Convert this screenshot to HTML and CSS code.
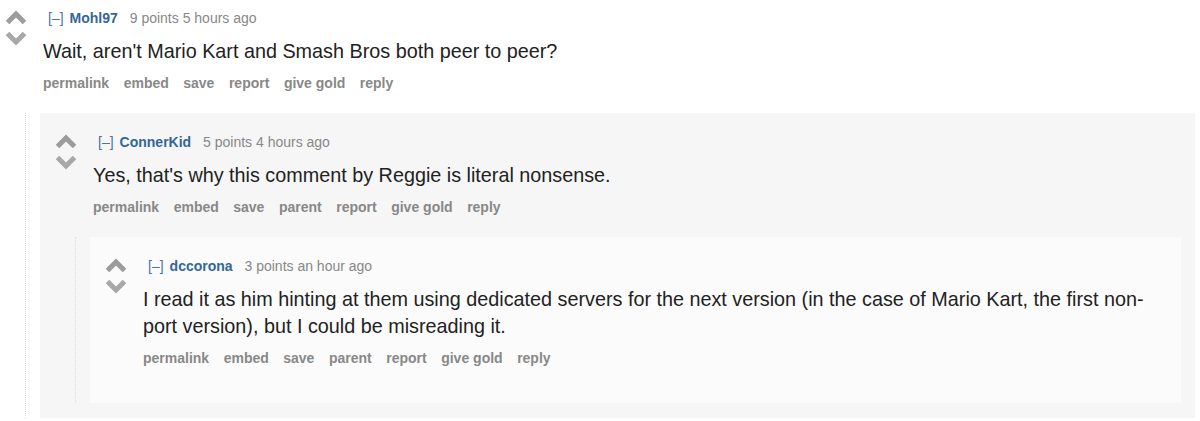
FILE: index.html
```html
<!DOCTYPE html>
<html>
<head>
<meta charset="utf-8">
<link rel="stylesheet" href="styles.css">
</head>
<body>
<div class="thread">
  <div class="comment top">
    <div class="row">
      <div class="midcol">
        <svg class="arrow up" viewBox="0 0 22 14" width="22" height="14"><polyline points="2.5,12.5 11,4 19.5,12.5"/></svg>
        <svg class="arrow down" viewBox="0 0 22 14" width="22" height="14"><polyline points="2.5,1.5 11,10 19.5,1.5"/></svg>
      </div>
      <div class="entry">
        <p class="tagline"><span class="expand">[–]</span><span class="author">Mohl97</span> <span class="score">9 points 5 hours ago</span></p>
        <div class="md"><p>Wait, aren't Mario Kart and Smash Bros both peer to peer?</p></div>
        <ul class="buttons"><li>permalink</li><li>embed</li><li>save</li><li>report</li><li>give gold</li><li>reply</li></ul>
      </div>
    </div>
    <div class="child">
      <div class="comment level2">
        <div class="row">
          <div class="midcol">
            <svg class="arrow up" viewBox="0 0 22 14" width="22" height="14"><polyline points="2.5,12.5 11,4 19.5,12.5"/></svg>
            <svg class="arrow down" viewBox="0 0 22 14" width="22" height="14"><polyline points="2.5,1.5 11,10 19.5,1.5"/></svg>
          </div>
          <div class="entry">
            <p class="tagline"><span class="expand">[–]</span><span class="author">ConnerKid</span> <span class="score">5 points 4 hours ago</span></p>
            <div class="md"><p>Yes, that's why this comment by Reggie is literal nonsense.</p></div>
            <ul class="buttons"><li>permalink</li><li>embed</li><li>save</li><li>parent</li><li>report</li><li>give gold</li><li>reply</li></ul>
          </div>
        </div>
        <div class="child">
          <div class="comment level3">
            <div class="row">
              <div class="midcol">
                <svg class="arrow up" viewBox="0 0 22 14" width="22" height="14"><polyline points="2.5,12.5 11,4 19.5,12.5"/></svg>
                <svg class="arrow down" viewBox="0 0 22 14" width="22" height="14"><polyline points="2.5,1.5 11,10 19.5,1.5"/></svg>
              </div>
              <div class="entry">
                <p class="tagline"><span class="expand">[–]</span><span class="author">dccorona</span> <span class="score">3 points an hour ago</span></p>
                <div class="md"><p>I read it as him hinting at them using dedicated servers for the next version (in the case of Mario Kart, the first non-port version), but I could be misreading it.</p></div>
                <ul class="buttons"><li>permalink</li><li>embed</li><li>save</li><li>parent</li><li>report</li><li>give gold</li><li>reply</li></ul>
              </div>
            </div>
          </div>
        </div>
      </div>
    </div>
  </div>
</div>
</body>
</html>
```

FILE: styles.css
```css
html, body {
  margin: 0;
  padding: 0;
  background: #ffffff;
  overflow: hidden;
}

body {
  font-family: "Liberation Sans", Arial, sans-serif;
  color: #222222;
}

.thread {
  margin: -11px 0 0 -10px;
}

.comment {
  padding: 19px 14px 14px 0;
}

.comment.top {
  padding-right: 5px;
}

.comment.level2 {
  background: #f6f6f6;
  padding-bottom: 15px;
}

.comment.level3 {
  background: #fbfbfb;
  padding-bottom: 15px;
}

.row {
  display: flex;
  align-items: flex-start;
}

.midcol {
  flex: 0 0 22px;
  width: 22px;
  margin: 2px 16px 0 15px;
  display: flex;
  flex-direction: column;
  gap: 8px;
}

.arrow {
  display: block;
}

.arrow polyline {
  fill: none;
  stroke-width: 5;
  stroke-linecap: butt;
  stroke-linejoin: miter;
}

.arrow.up polyline {
  stroke: #9c9c9c;
}

.arrow.down polyline {
  stroke: #a8a8a8;
}

.entry {
  flex: 1 1 auto;
  min-width: 0;
  padding-bottom: 20px;
}

.tagline {
  margin: 0;
  padding-left: 5px;
  font-size: 14px;
  line-height: 20px;
  color: #888888;
}

.expand {
  color: #4a74a0;
  margin-right: 6px;
}

.author {
  color: #336699;
  font-weight: bold;
  margin-right: 8px;
}

.score {
  color: #888888;
}

.md {
  margin-top: 10px;
  font-size: 19.8px;
  line-height: 27px;
  color: #222222;
}

.md p {
  margin: 0;
}

.buttons {
  list-style: none;
  margin: 8px 0 0 0;
  padding: 0;
  display: flex;
  gap: 14.5px;
  font-size: 14px;
  line-height: 20px;
  font-weight: bold;
  color: #888888;
}

.child {
  margin-left: 35px;
  border-left: 1px dotted #dedede;
  padding-left: 14px;
}
```
